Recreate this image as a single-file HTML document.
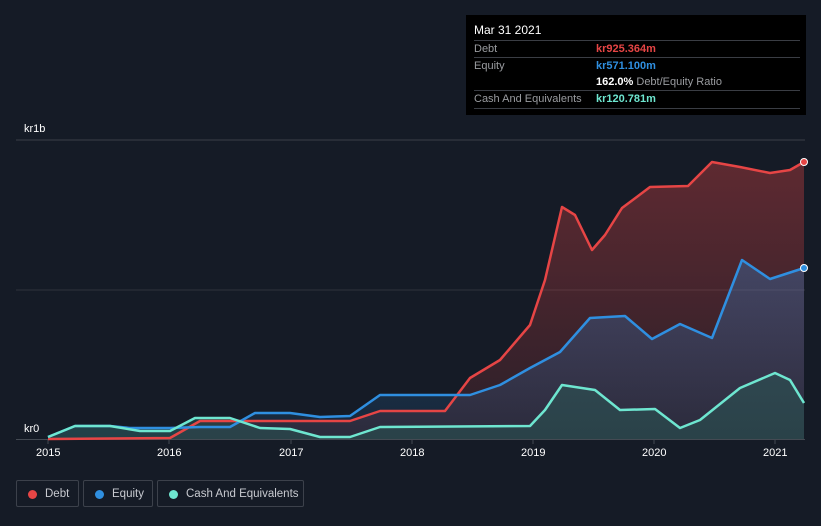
<!DOCTYPE html>
<html><head><style>
body{margin:0;background:#151b26;width:821px;height:526px;overflow:hidden;font-family:"Liberation Sans",sans-serif;position:relative}
.tt{position:absolute;left:466px;top:15px;width:340px;height:100px;background:#000;color:#fff;font-size:11px}
.r{position:absolute;left:8px;right:6px;height:17px;line-height:17px;border-top:1px solid #3a3d44;color:#9a9ca0}
.v{position:absolute;left:122px;font-weight:bold}
.ax{position:absolute;color:#fff;font-size:11px}
.lg{position:absolute;top:480px;height:27px;border:1px solid #3c414b;border-radius:2px;color:#c8cad0;font-size:11.5px;line-height:26px;box-sizing:border-box;padding-left:28px;white-space:nowrap}
.lg i{position:absolute;left:11px;top:9px;width:9px;height:9px;border-radius:50%}
</style></head><body>
<svg width="821" height="526" style="position:absolute;left:0;top:0">
<defs>
<linearGradient id="gd" x1="0" y1="0" x2="0" y2="1"><stop offset="0" stop-color="#e64545" stop-opacity=".35"/><stop offset="1" stop-color="#e64545" stop-opacity=".1"/></linearGradient>
<linearGradient id="ge" x1="0" y1="0" x2="0" y2="1"><stop offset="0" stop-color="#2f8fe0" stop-opacity=".3"/><stop offset="1" stop-color="#2f8fe0" stop-opacity=".1"/></linearGradient>
</defs>
<line x1="16" y1="140" x2="805" y2="140" stroke="#3a3f48"/>
<line x1="16" y1="290" x2="805" y2="290" stroke="#2e333c"/>
<line x1="16" y1="439.5" x2="805" y2="439.5" stroke="#444a53"/>
<g stroke="#444a53"><line x1="48" y1="440" x2="48" y2="444"/><line x1="169" y1="440" x2="169" y2="444"/><line x1="291" y1="440" x2="291" y2="444"/><line x1="412" y1="440" x2="412" y2="444"/><line x1="533" y1="440" x2="533" y2="444"/><line x1="654" y1="440" x2="654" y2="444"/><line x1="775" y1="440" x2="775" y2="444"/></g>
<polygon fill="url(#gd)" points="48,439 170,438 200,421 350,421 380,411 445,411 470,378 500,360 530,325 545,280 562,207 575,215 592,250 605,235 622,208 650,187 688,186 712,162 740,167 770,173 790,170 804,162 804,439"/>
<polygon fill="url(#ge)" points="48,437 75,426 110,426 130,428 170,428 200,427 230,427 255,413 290,413 320,417 350,416 380,395 470,395 500,385 530,368 560,352 590,318 625,316 652,339 680,324 712,338 742,260 770,279 804,268 804,439 48,439"/>
<polygon fill="#2a5a55" fill-opacity=".5" points="48,437 75,426 110,426 140,431 170,431 195,418 230,418 260,428 290,429 320,437 350,437 380,427 530,426 545,410 562,385 595,390 620,410 655,409 680,428 700,420 740,388 775,373 790,380 804,403 804,439 48,439"/>
<g fill="none" stroke-width="2.5" stroke-linejoin="round">
<polyline stroke="#e64545" points="48,439 170,438 200,421 350,421 380,411 445,411 470,378 500,360 530,325 545,280 562,207 575,215 592,250 605,235 622,208 650,187 688,186 712,162 740,167 770,173 790,170 804,162"/>
<polyline stroke="#2f8fe0" points="48,437 75,426 110,426 130,428 170,428 200,427 230,427 255,413 290,413 320,417 350,416 380,395 470,395 500,385 530,368 560,352 590,318 625,316 652,339 680,324 712,338 742,260 770,279 804,268"/>
<polyline stroke="#6ee6d0" points="48,437 75,426 110,426 140,431 170,431 195,418 230,418 260,428 290,429 320,437 350,437 380,427 530,426 545,410 562,385 595,390 620,410 655,409 680,428 700,420 740,388 775,373 790,380 804,403"/>
</g>
<circle cx="804" cy="162" r="3.5" fill="#e64545" stroke="#fff"/>
<circle cx="804" cy="268" r="3.5" fill="#2f8fe0" stroke="#fff"/>
</svg>
<div class="ax" style="left:24px;top:123px">kr1b</div>
<div class="ax" style="left:24px;top:423px">kr0</div>
<div class="ax" style="left:36px;top:447px">2015</div>
<div class="ax" style="left:157px;top:447px">2016</div>
<div class="ax" style="left:279px;top:447px">2017</div>
<div class="ax" style="left:400px;top:447px">2018</div>
<div class="ax" style="left:521px;top:447px">2019</div>
<div class="ax" style="left:642px;top:447px">2020</div>
<div class="ax" style="left:763px;top:447px">2021</div>
<div class="tt">
<div style="position:absolute;left:8px;top:8px;font-size:12px">Mar 31 2021</div>
<div class="r" style="top:25px">Debt<span class="v" style="color:#e64545">kr925.364m</span></div>
<div class="r" style="top:42px">Equity<span class="v" style="color:#2f8fe0">kr571.100m</span></div>
<div class="r" style="top:59px;border-top:none"><span class="v" style="color:#fff">162.0% <span style="font-weight:normal;color:#9a9ca0">Debt/Equity Ratio</span></span></div>
<div class="r" style="top:75px">Cash And Equivalents<span class="v" style="color:#6ee6d0">kr120.781m</span></div>
<div style="position:absolute;left:8px;right:6px;top:93px;border-top:1px solid #3a3d44"></div>
</div>
<div class="lg" style="left:16px;width:63px"><i style="background:#e64545"></i>Debt</div>
<div class="lg" style="left:83px;width:70px"><i style="background:#2f8fe0"></i>Equity</div>
<div class="lg" style="left:157px;width:147px"><i style="background:#6ee6d0"></i>Cash And Equivalents</div>
</body></html>
